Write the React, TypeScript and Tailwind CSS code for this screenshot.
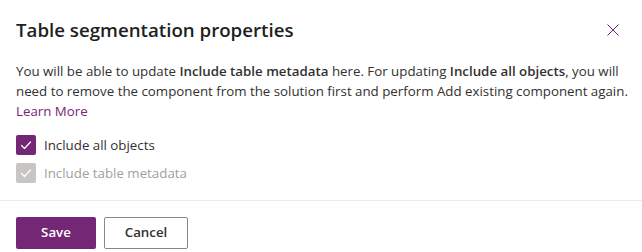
import React, { useState } from "react";

const Check: React.FC = () => (
    <svg width="20" height="20" viewBox="0 0 20 20" fill="none">
        <path d="M5.5 10.5l3 3 6-6.5" stroke="white" strokeWidth="1.2" strokeLinecap="round" strokeLinejoin="round" />
    </svg>
)

const App: React.FC = () => {
    const [allObjects, setAllObjects] = useState(true)

    return (
        <div className="w-[642px] h-[252px] bg-white text-[#323130] overflow-hidden" style={{ fontFamily: '"Open Sans", "Noto Sans", sans-serif' }}>
            <div className="flex items-center justify-between pl-4 pr-[22px] pt-[16px]">
                <h2 className="text-[18.7px] leading-[28px] font-semibold text-[#201f1e]">Table segmentation properties</h2>
                <button className="w-[14px] h-[14px] flex items-center justify-center text-[#742774]">
                    <svg width="12" height="12" viewBox="0 0 12 12">
                        <path d="M0.5 0.5L11.5 11.5M11.5 0.5L0.5 11.5" stroke="currentColor" strokeWidth="1" />
                    </svg>
                </button>
            </div>
            <div className="px-4 pt-[17px]">
                <p className="text-[13.3px] leading-[20px] whitespace-nowrap">
                    You will be able to update <b className="font-semibold">Include table metadata</b> here. For updating <b className="font-semibold">Include all objects</b>, you will<br />
                    need to remove the component from the solution first and perform Add existing component again.<br />
                    <a className="text-[#742774] cursor-pointer">Learn More</a>
                </p>
                <div className="mt-[14px] flex flex-col gap-2">
                    <label className="flex items-center gap-2 cursor-pointer" onClick={() => setAllObjects(!allObjects)}>
                        <span className={`w-5 h-5 rounded-[2px] flex items-center justify-center ${allObjects ? "bg-[#742774]" : "border border-[#323130]"}`}>
                            {allObjects && <Check />}
                        </span>
                        <span className="text-[13.3px] leading-[20px]">Include all objects</span>
                    </label>
                    <label className="flex items-center gap-2">
                        <span className="w-5 h-5 rounded-[2px] flex items-center justify-center bg-[#c8c6c4]">
                            <Check />
                        </span>
                        <span className="text-[13.3px] leading-[20px] text-[#a19f9d]">Include table metadata</span>
                    </label>
                </div>
            </div>
            <div className="mt-[17px] border-t border-[#edebe9]" />
            <div className="flex gap-2 px-4 pt-4">
                <button className="w-20 h-8 rounded-[2px] bg-[#742774] text-white text-[13.3px] font-semibold">Save</button>
                <button className="w-[84px] h-8 rounded-[2px] border border-[#8a8886] bg-white text-[#323130] text-[13.3px] font-semibold">Cancel</button>
            </div>
        </div>
    )
}

export default App;
